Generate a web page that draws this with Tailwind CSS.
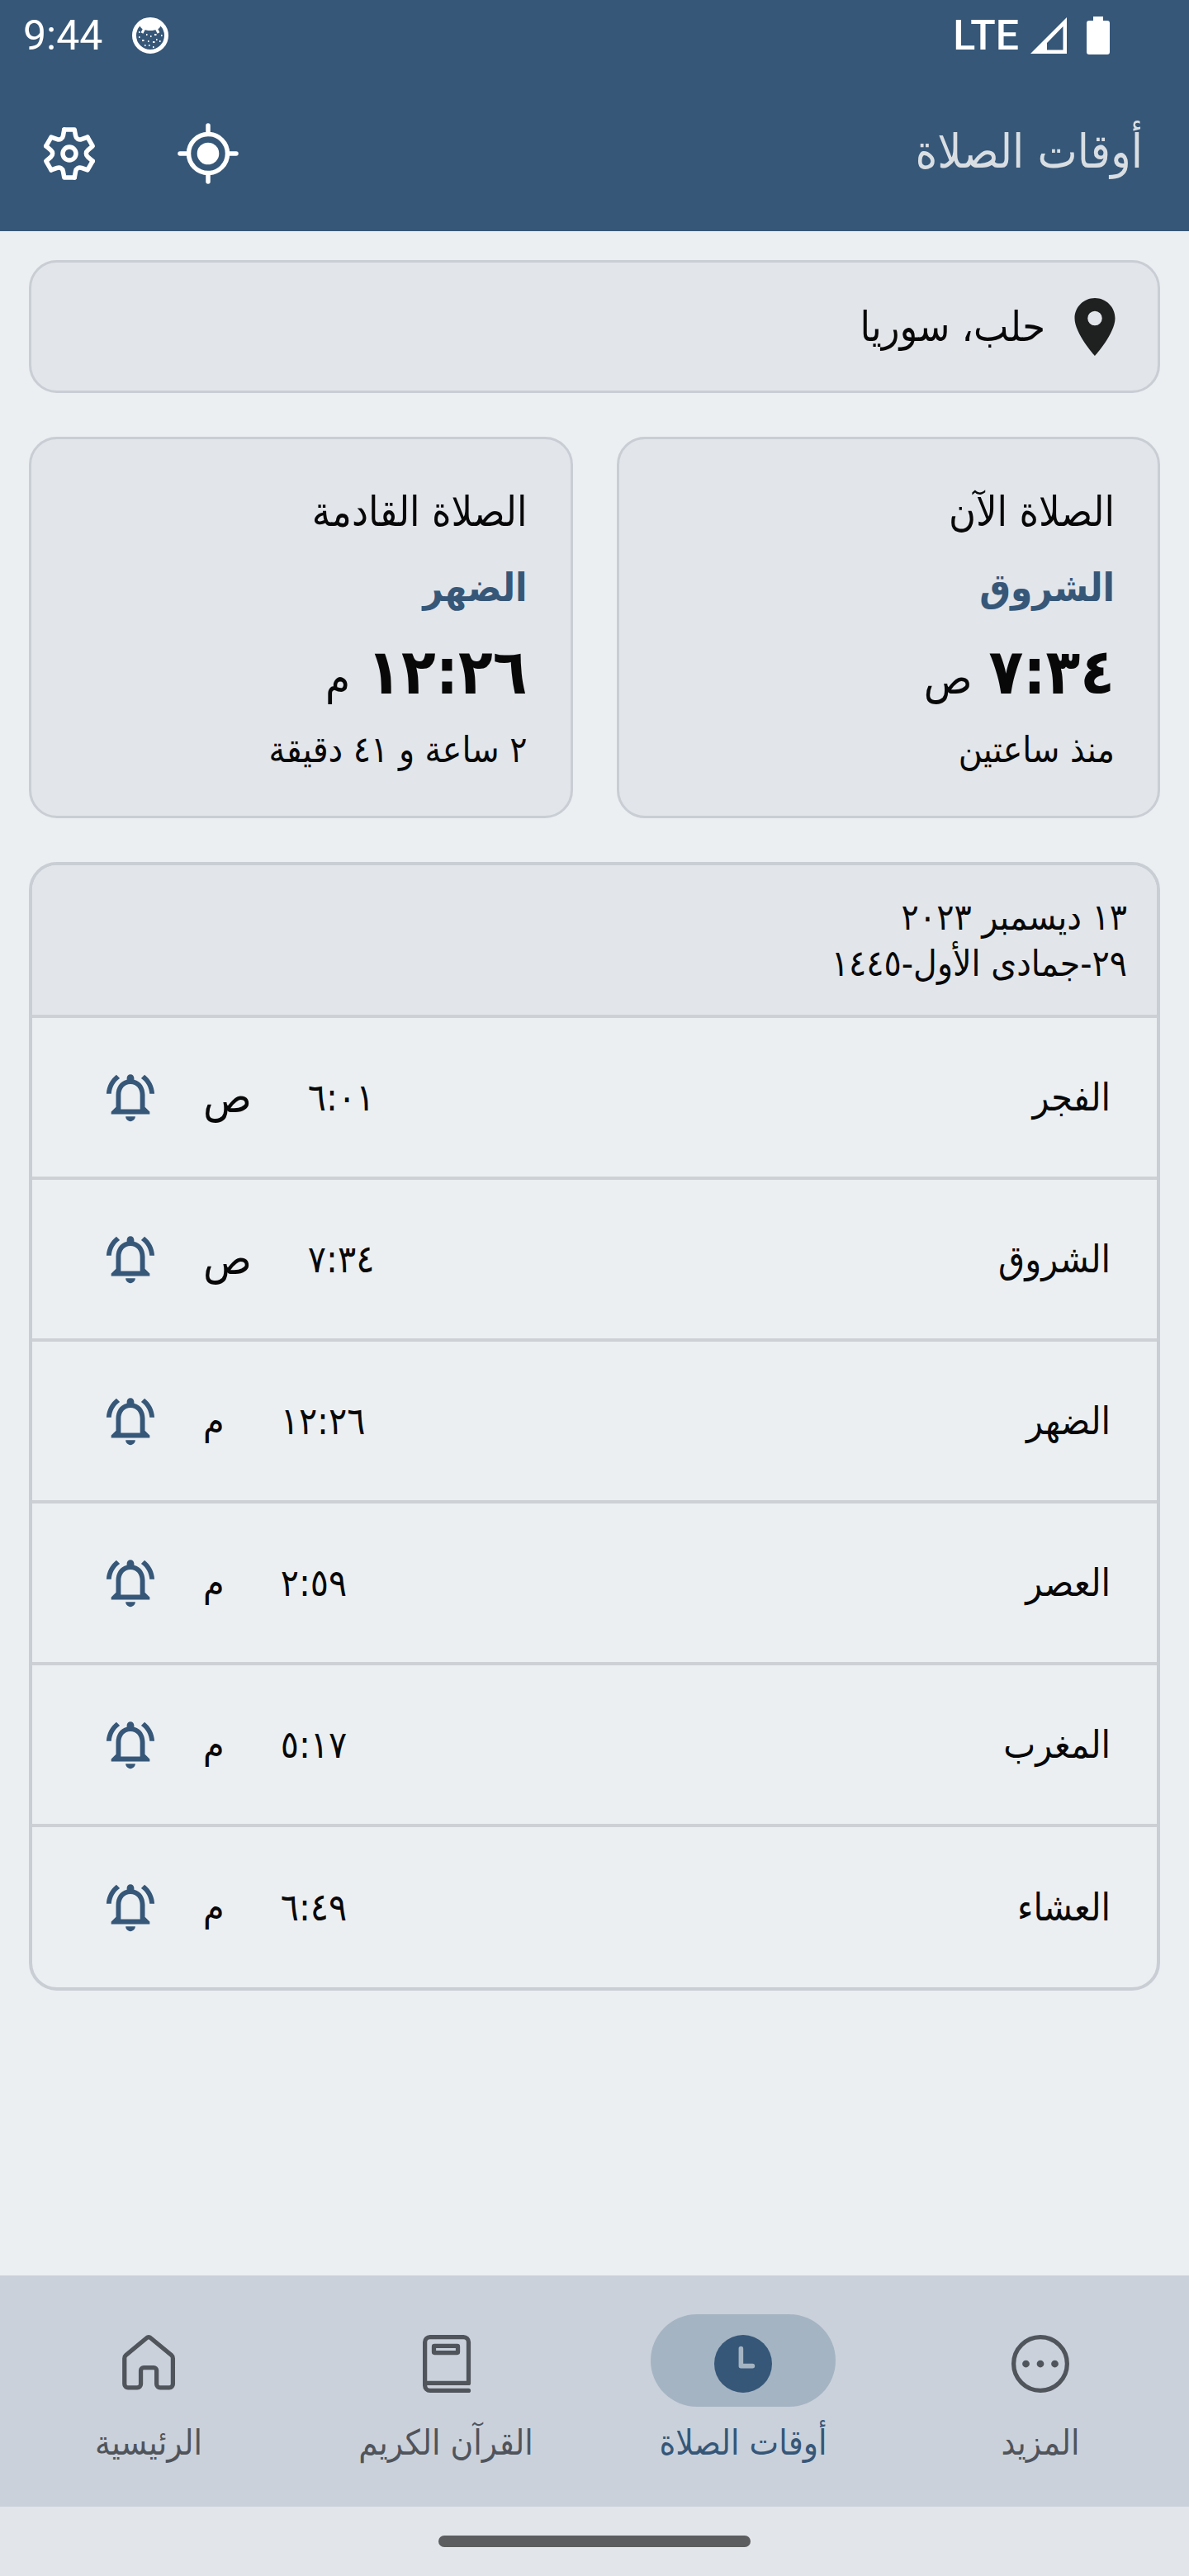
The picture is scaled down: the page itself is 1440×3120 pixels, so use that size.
<!DOCTYPE html>
<html lang="ar" dir="rtl">
<head>
<meta charset="utf-8">
<meta name="viewport" content="width=device-width, initial-scale=1">
<title>أوقات الصلاة</title>
<script src="https://cdn.jsdelivr.net/npm/@tailwindcss/browser@4"></script>
</head>
<body class="flex min-h-screen flex-col bg-[#ebeff2] font-['DejaVu_Sans_Condensed','DejaVu_Sans',sans-serif] text-[#080808]">

<svg class="hidden" aria-hidden="true">
  <symbol id="bell" viewBox="0 0 24 24"><path fill="currentColor" d="M12 22c1.1 0 2-.9 2-2h-4c0 1.1.9 2 2 2zm6-6v-5c0-3.07-1.63-5.64-4.5-6.32V4c0-.83-.67-1.5-1.5-1.5s-1.5.67-1.5 1.5v.68C7.64 5.36 6 7.92 6 11v5l-2 2v1h16v-1l-2-2zm-2 1H8v-6c0-2.48 1.51-4.5 4-4.5s4 2.02 4 4.5v6zM7.58 4.08L6.15 2.65C3.75 4.48 2.17 7.3 2.03 10.5h2c.15-2.65 1.51-4.97 3.55-6.42zm12.39 6.42h2c-.15-3.2-1.73-6.02-4.12-7.85l-1.42 1.43c2.02 1.45 3.39 3.77 3.54 6.42z"/></symbol>
</svg>

<header class="bg-[#365778] text-white">
  <div dir="ltr" class="flex h-[86px] items-center justify-between pr-24 pl-7 font-[Roboto,sans-serif] text-[50px]">
    <div class="flex items-center gap-9">
      <span>9:44</span>
      <svg class="size-11" viewBox="0 0 44 44" fill="none">
        <circle cx="22" cy="22" r="19.5" stroke="#fff" stroke-width="5"/>
        <path d="M9 9C15 2 29 2 35 9C34 14 29 16 22 16S10 14 9 9Z" fill="#fff"/>
        <path d="M14.500 14L12 19M29.500 14L32 19" stroke="#fff" stroke-width="3"/>
        <path d="M12 28h2.500M19 29h1.500M25 30h2.500M29 27h1.500M22 23h1.500M27 21h2.500M17 21h1.500M8 24h1.500M33 29h1.500M35 22h1.500M15 34h1.500M20 34h1.500M25 36h1.500M8 18h1.500" stroke="#fff" stroke-width="2"/>
      </svg>
    </div>
    <div class="flex items-center gap-3.5">
      <span class="font-medium">LTE</span>
      <svg class="size-11" viewBox="0 0 44 44"><path fill="#fff" fill-rule="evenodd" d="M44 0V44H0ZM39.5 11L20 31V39.5H39.5Z"/></svg>
      <svg class="ml-2.5 h-[46px] w-7" viewBox="0 0 28 46"><path fill="#fff" d="M8 0H20V5H25a3 3 0 0 1 3 3V43a3 3 0 0 1-3 3H3a3 3 0 0 1-3-3V8a3 3 0 0 1 3-3H8Z"/></svg>
    </div>
  </div>
  <div class="flex h-[194px] items-center justify-between pr-14 pl-[42px]">
    <h1 class="text-[57px] leading-[64px] text-[#d9dee3]">أوقات الصلاة</h1>
    <div dir="ltr" class="flex items-center gap-21 pt-1.5">
      <button type="button" aria-label="الإعدادات" class="block">
        <svg class="size-21" viewBox="-42 -42 84 84" fill="none" stroke="#fff" stroke-width="5.5" stroke-linejoin="round" stroke-linecap="round">
          <path id="t" d="M-6.2-29H6.2L7.6-21.5C8.2-18 11.5-16.1 14.8-17.3L22-19.9"/>
          <use href="#t" transform="rotate(60)"/><use href="#t" transform="rotate(120)"/><use href="#t" transform="rotate(180)"/><use href="#t" transform="rotate(240)"/><use href="#t" transform="rotate(300)"/>
          <circle r="8"/>
        </svg>
      </button>
      <button type="button" aria-label="تحديد الموقع" class="block">
        <svg class="size-21" viewBox="-42 -42 84 84" fill="none" stroke="#fff" stroke-width="5.5" stroke-linecap="round">
          <circle r="23.5"/><circle r="13.3" fill="#fff" stroke="none"/>
          <path d="M0-34V-25M0 34V25M-34 0H-25M34 0H25"/>
        </svg>
      </button>
    </div>
  </div>
</header>

<main class="flex grow flex-col gap-[53px] px-[35px] pt-[35px] pb-20">
  <section class="flex h-[161px] items-center gap-[18px] rounded-[34px] border-3 border-[#c9cdd4] bg-[#e2e5ea] px-[34px]">
    <svg class="size-21 text-[#1f2120]" viewBox="0 0 24 24" fill="currentColor" aria-hidden="true"><path d="M12 2C8.13 2 5 5.13 5 9c0 5.25 7 13 7 13s7-7.75 7-13c0-3.87-3.13-7-7-7zm0 9.5a2.5 2.5 0 1 1 0-5 2.5 2.5 0 0 1 0 5z"/></svg>
    <p class="text-[50px] leading-[64px]">حلب، سوريا</p>
  </section>

  <div class="grid grid-cols-2 gap-[53px]">
    <section class="flex h-[462px] flex-col rounded-[34px] border-3 border-[#c9cdd4] bg-[#e2e5ea] px-[52px] pt-13">
      <h2 class="text-[50px] leading-[72px]">الصلاة الآن</h2>
      <p class="mt-4 text-[47px] leading-[80px] font-bold text-[#365778]">الشروق</p>
      <p class="mt-4 flex items-baseline gap-5 leading-[92px]"><span class="text-[76px] font-bold">٧:٣٤</span><span class="text-[54px]">ص</span></p>
      <p class="mt-2 text-[44px] leading-[64px]">منذ ساعتين</p>
    </section>
    <section class="flex h-[462px] flex-col rounded-[34px] border-3 border-[#c9cdd4] bg-[#e2e5ea] px-[52px] pt-13">
      <h2 class="text-[50px] leading-[72px]">الصلاة القادمة</h2>
      <p class="mt-4 text-[47px] leading-[80px] font-bold text-[#365778]">الضهر</p>
      <p class="mt-4 flex items-baseline gap-5 leading-[92px]"><span class="text-[76px] font-bold">١٢:٢٦</span><span class="text-[54px]">م</span></p>
      <p class="mt-2 text-[44px] leading-[64px]">٢ ساعة و ٤١ دقيقة</p>
    </section>
  </div>

  <div class="overflow-hidden rounded-[34px] border-4 border-[#c9cdd4]">
    <table class="w-full border-separate border-spacing-0 text-[46px] leading-[64px]">
      <thead>
        <tr class="h-[181px] bg-[#e2e5ea]">
          <th colspan="2" class="px-9 text-start text-[44px] leading-14 font-normal">١٣ ديسمبر ٢٠٢٣<br>٢٩-جمادى الأول-١٤٤٥</th>
        </tr>
      </thead>
      <tbody class="[&_td]:border-t-4 [&_td]:border-[#cdd1d5] [&_th]:border-t-4 [&_th]:border-[#cdd1d5]">
        <tr class="h-[196px]"><th scope="row" class="px-14 text-start font-normal">الفجر</th><td><div dir="ltr" class="flex items-center pl-21"><button type="button" aria-label="تنبيه الفجر"><svg class="size-[70px] text-[#365778]"><use href="#bell"/></svg></button><span class="ml-[53px] text-[54px]">ص</span><time class="ml-17">٦:٠١</time></div></td></tr>
        <tr class="h-[196px]"><th scope="row" class="px-14 text-start font-normal">الشروق</th><td><div dir="ltr" class="flex items-center pl-21"><button type="button" aria-label="تنبيه الشروق"><svg class="size-[70px] text-[#365778]"><use href="#bell"/></svg></button><span class="ml-[53px] text-[54px]">ص</span><time class="ml-17">٧:٣٤</time></div></td></tr>
        <tr class="h-[196px]"><th scope="row" class="px-14 text-start font-normal">الضهر</th><td><div dir="ltr" class="flex items-center pl-21"><button type="button" aria-label="تنبيه الضهر"><svg class="size-[70px] text-[#365778]"><use href="#bell"/></svg></button><span class="ml-[53px]">م</span><time class="ml-17">١٢:٢٦</time></div></td></tr>
        <tr class="h-[196px]"><th scope="row" class="px-14 text-start font-normal">العصر</th><td><div dir="ltr" class="flex items-center pl-21"><button type="button" aria-label="تنبيه العصر"><svg class="size-[70px] text-[#365778]"><use href="#bell"/></svg></button><span class="ml-[53px]">م</span><time class="ml-17">٢:٥٩</time></div></td></tr>
        <tr class="h-[196px]"><th scope="row" class="px-14 text-start font-normal">المغرب</th><td><div dir="ltr" class="flex items-center pl-21"><button type="button" aria-label="تنبيه المغرب"><svg class="size-[70px] text-[#365778]"><use href="#bell"/></svg></button><span class="ml-[53px]">م</span><time class="ml-17">٥:١٧</time></div></td></tr>
        <tr class="h-[198px]"><th scope="row" class="px-14 text-start font-normal">العشاء</th><td><div dir="ltr" class="flex items-center pl-21"><button type="button" aria-label="تنبيه العشاء"><svg class="size-[70px] text-[#365778]"><use href="#bell"/></svg></button><span class="ml-[53px]">م</span><time class="ml-17">٦:٤٩</time></div></td></tr>
      </tbody>
    </table>
  </div>
</main>

<nav class="grid h-[280px] grid-cols-4 bg-[#cad1db] text-[42px] leading-14 text-[#50545b]">
  <a href="#more" class="flex flex-col items-center gap-4 pt-[47px]">
    <span class="flex h-28 w-56 items-center justify-center pt-2">
      <svg class="size-21" viewBox="0 0 24 24" fill="none" stroke="currentColor" stroke-width="1.5"><circle cx="12" cy="12" r="9.25"/><g fill="currentColor" stroke="none"><circle cx="7" cy="12" r="1.25"/><circle cx="12" cy="12" r="1.25"/><circle cx="17" cy="12" r="1.25"/></g></svg>
    </span>
    المزيد
  </a>
  <a href="#times" aria-current="page" class="flex flex-col items-center gap-4 pt-[47px] text-[#365778]">
    <span class="flex h-28 w-56 items-center justify-center rounded-full bg-[#a5b4c3] pt-2">
      <svg class="size-21" viewBox="0 0 24 24" fill="none"><circle cx="12" cy="12" r="10" fill="#365778"/><path d="M11.25 6.75V12.75H15.25" stroke="#a5b4c3" stroke-width="1.6" stroke-linecap="round" stroke-linejoin="round"/></svg>
    </span>
    أوقات الصلاة
  </a>
  <a href="#quran" class="flex flex-col items-center gap-4 pt-[47px]">
    <span class="flex h-28 w-56 items-center justify-center pt-2">
      <svg class="size-21" viewBox="0 0 24 24" fill="none" stroke="currentColor" stroke-width="1.5" stroke-linecap="round" stroke-linejoin="round"><path d="M19.85 21.25H6.5A1.75 1.75 0 0 1 4.75 19.5V4.5A1.75 1.75 0 0 1 6.5 2.75H18.1A1.75 1.75 0 0 1 19.85 4.5V18.7H4.75"/><rect x="7.85" y="5.85" width="8.3" height="2.3" rx=".2"/></svg>
    </span>
    القرآن الكريم
  </a>
  <a href="#home" class="flex flex-col items-center gap-4 pt-[47px]">
    <span class="flex h-28 w-56 items-center justify-center pt-2">
      <svg class="size-21" viewBox="0 0 24 24" fill="none" stroke="currentColor" stroke-width="1.5" stroke-linejoin="round"><path d="M11.3 3.05a1.05 1.05 0 0 1 1.4 0L19.9 9a1.4 1.4 0 0 1 .5 1.1V19a1.25 1.25 0 0 1-1.25 1.25H16A1.25 1.25 0 0 1 14.75 19V14.3a1 1 0 0 0-1-1H10.3a1 1 0 0 0-1 1V19A1.25 1.25 0 0 1 8.05 20.25H4.9A1.25 1.25 0 0 1 3.65 19V10.1A1.4 1.4 0 0 1 4.15 9Z"/></svg>
    </span>
    الرئيسية
  </a>
</nav>
<footer class="flex h-21 items-center justify-center bg-[#e2e5ea]"><div class="h-3.5 w-[378px] rounded-full bg-[#5c5d5e]"></div></footer>
</body>
</html>
